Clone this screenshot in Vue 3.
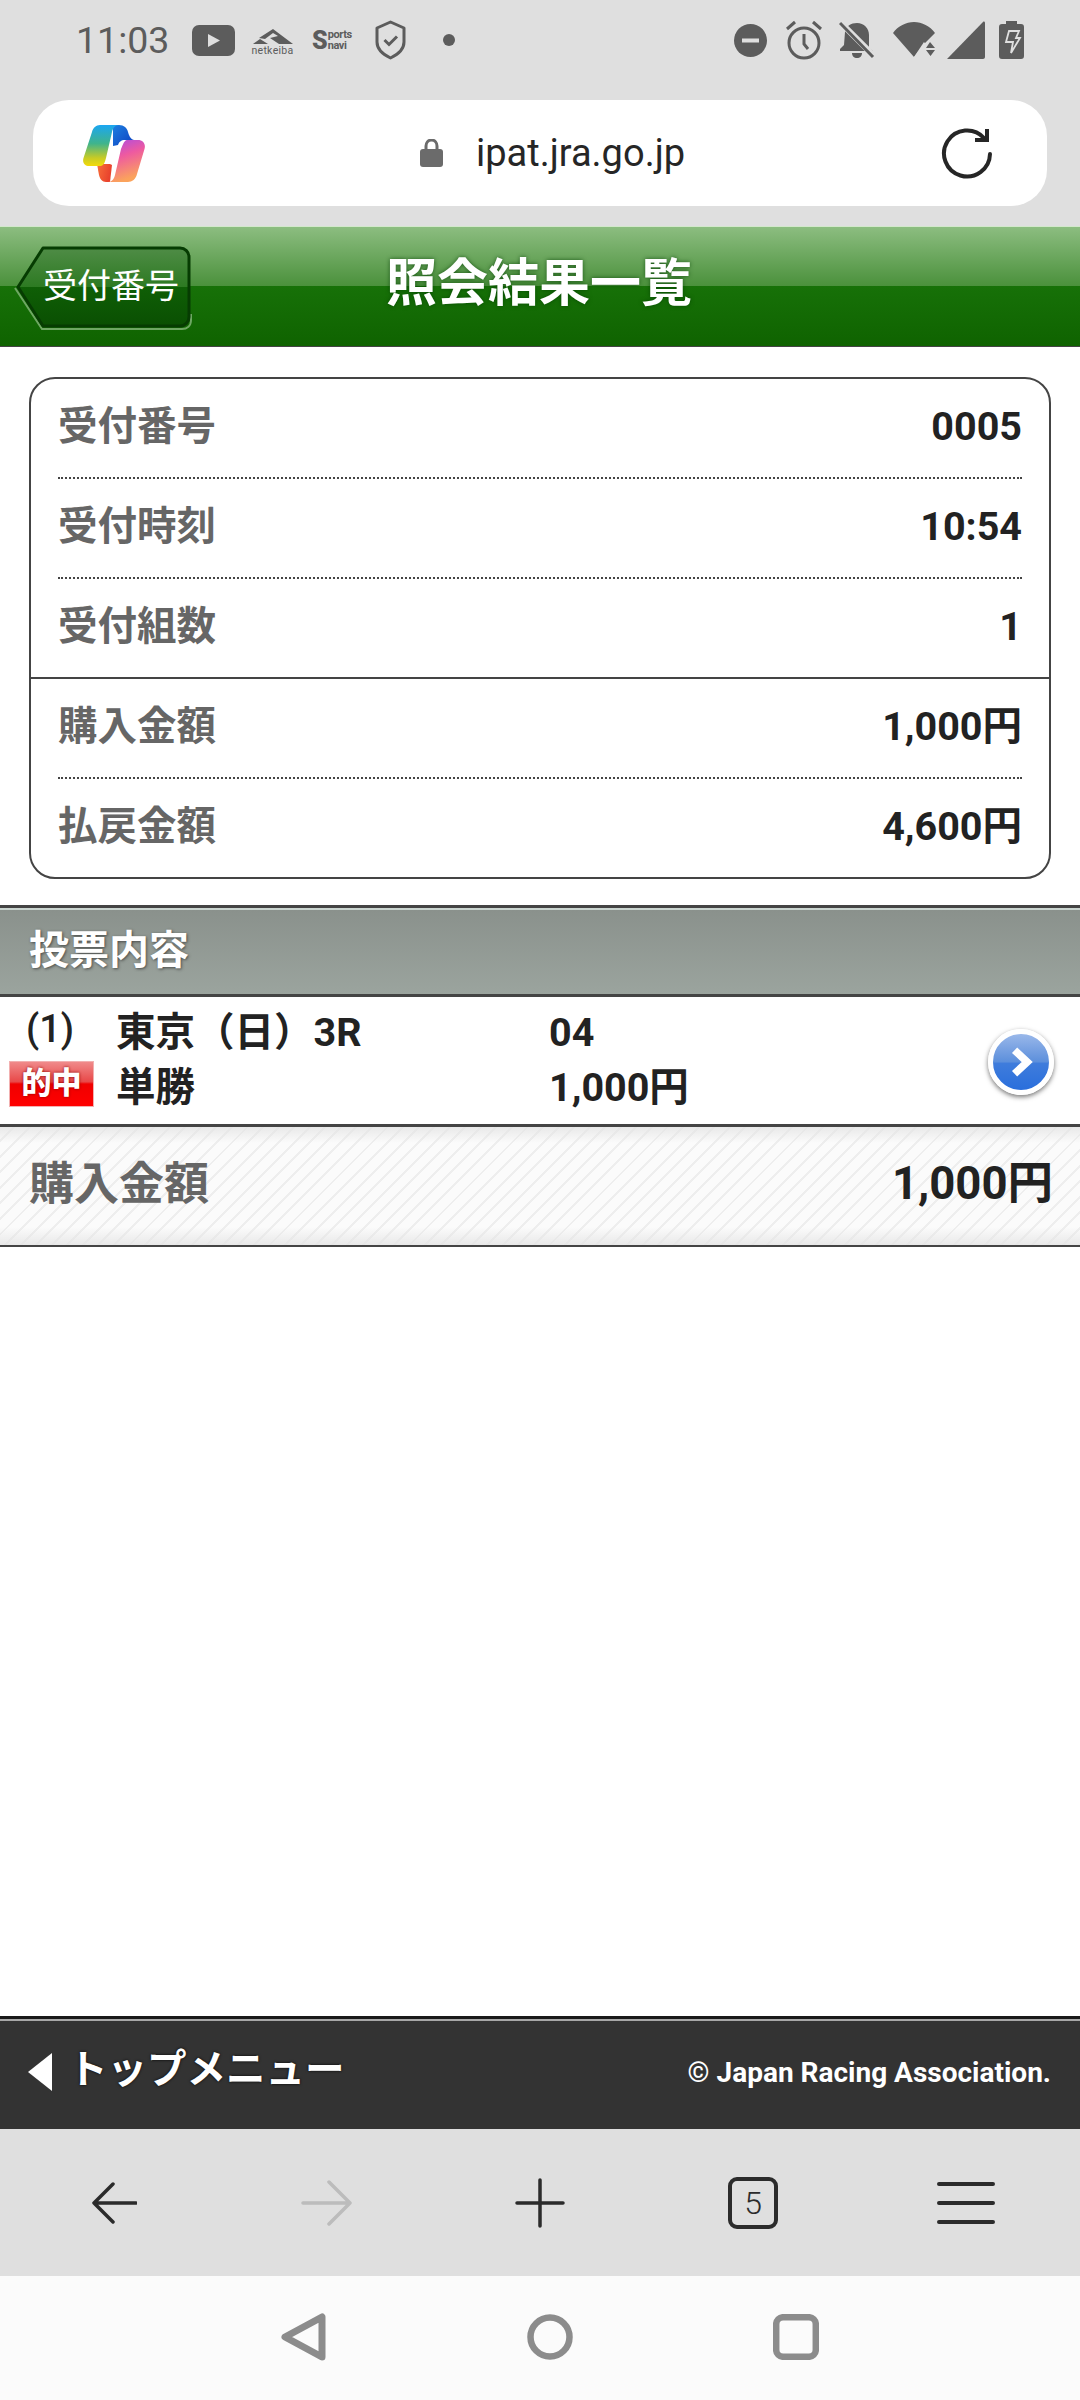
<script setup>
const groups = [
  [
    { label: "受付番号", value: "0005" },
    { label: "受付時刻", value: "10:54" },
    { label: "受付組数", value: "1" },
  ],
  [
    { label: "購入金額", value: "1,000円" },
    { label: "払戻金額", value: "4,600円" },
  ],
];
</script>

<template>
  <div class="page">
    <div class="chrome">
      <div class="status">
        <span class="time">11:03</span>
        <svg class="ic-yt" viewBox="0 0 43 31"><rect width="43" height="31" rx="7" fill="#5c5c5c" /><path d="M16 9l12 6.500L16 22z" fill="#dfdfdf" /></svg>
        <div class="netkeiba">
          <svg viewBox="0 0 41 17" width="41" height="17"><path d="M21 0l20 15H27l-9-6 8-2-5-3-8 6-6-1zM1 15l7-5 8 5z" fill="#5c5c5c" /></svg>
          <span>netkeiba</span>
        </div>
        <div class="navi">
          <b>S</b>
          <span class="navi-words"><i>ports</i><i>navi</i></span>
        </div>
        <svg class="ic-shield" viewBox="0 0 31 40"><path d="M15.500 2L29 8v14c0 7-5 12-13.500 16C7 34 2 29 2 22V8z" fill="none" stroke="#5c5c5c" stroke-width="3" stroke-linejoin="round" /><path d="M9.500 20l4.500 4.500 8-8" fill="none" stroke="#5c5c5c" stroke-width="3" /></svg>
        <span class="dot"></span>

        <div class="status-right">
          <svg width="33" height="33" viewBox="0 0 33 33"><circle cx="16.500" cy="16.500" r="16.500" fill="#5c5c5c" /><rect x="8" y="14.500" width="17" height="4" fill="#dfdfdf" /></svg>
          <svg class="gap-alarm" width="36" height="40" viewBox="0 0 36 40"><circle cx="18" cy="23" r="15" fill="none" stroke="#5c5c5c" stroke-width="3" /><path d="M18 14v10l4 5M1 9l8-7M35 9l-8-7" fill="none" stroke="#5c5c5c" stroke-width="3" /></svg>
          <svg class="gap-bell" width="36" height="38" viewBox="0 0 36 38"><path d="M6 11C7 5 12 2 18 2c7 0 12 5 12 12v13l4 3H1v-2l4-4z" fill="#5c5c5c" /><path d="M13 32h10c0 3-2 5-5 5s-5-2-5-5z" fill="#5c5c5c" /><path d="M0 0l36 36" stroke="#dfdfdf" stroke-width="6" /><path d="M1 2l33 34" stroke="#5c5c5c" stroke-width="3" /></svg>
          <svg class="gap-wifi" width="42" height="36" viewBox="0 0 42 36"><path d="M0 11C5 4 13 0 21 0s16 4 21 11L31 22v0l-10 13z" fill="#5c5c5c" /><path d="M31 20l-10 15h21z" fill="#dfdfdf" /><path d="M37 20l5 6h-9zM33 28h9l-4.500 6z" fill="#5c5c5c" /></svg>
          <svg class="gap-signal" width="38" height="38" viewBox="0 0 38 38"><path d="M0 38L36 1c1-1 2 0 2 1v34c0 1-1 2-2 2z" fill="#5c5c5c" /></svg>
          <svg class="gap-battery" width="25" height="38" viewBox="0 0 25 38"><path d="M7 0h11v3h4c2 0 3 1 3 3v29c0 2-1 3-3 3H3c-2 0-3-1-3-3V6c0-2 1-3 3-3h4z" fill="#5c5c5c" /><path d="M10 10h10l-3 7h4l-9 15 2-11H7z" fill="none" stroke="#dfdfdf" stroke-width="1.800" /></svg>
        </div>
      </div>

      <div class="urlbar">
        <svg class="copilot" viewBox="0 0 62 57">
          <defs>
            <linearGradient id="cpLeft" x1="0" y1="0" x2="0" y2="1">
              <stop offset="0" stop-color="#1ba6f2" />
              <stop offset="0.45" stop-color="#3fb48c" />
              <stop offset="0.8" stop-color="#c6cb26" />
              <stop offset="1" stop-color="#f4da0a" />
            </linearGradient>
            <linearGradient id="cpRight" x1="0" y1="0" x2="0.300" y2="1">
              <stop offset="0" stop-color="#a94be6" />
              <stop offset="0.45" stop-color="#ee5aa0" />
              <stop offset="1" stop-color="#fba35c" />
            </linearGradient>
            <linearGradient id="cpBlue" x1="0" y1="0" x2="1" y2="1">
              <stop offset="0" stop-color="#1d7fe0" />
              <stop offset="1" stop-color="#0f3fc0" />
            </linearGradient>
            <linearGradient id="cpRed" x1="0" y1="0" x2="1" y2="0.300">
              <stop offset="0" stop-color="#f8703a" />
              <stop offset="1" stop-color="#e8402c" />
            </linearGradient>
          </defs>
          <path d="M30 0h6c5 0 8 3 9 7 1 3 2 7 6 8H42c-4 0-6 2-7 5l-5 1z" fill="url(#cpBlue)" />
          <path d="M14 39h13l2 1-2 17h-4c-4 0-6-3-7-7z" fill="url(#cpRed)" />
          <path d="M17 0h19c-4 0-6 3-7 7L23 33c-1 4-2 7-5 8H6c-4 0-7-3-5.500-8L9 7c1-4 4-7 8-7z" fill="url(#cpLeft)" />
          <path d="M44 15h11c5 0 8 4 6.500 9L54 49c-1 5-5 8-9 8H25c4 0 6-3 7-7l6-26c1-2 3-9 6-9z" fill="url(#cpRight)" />
        </svg>
        <svg class="lock" viewBox="0 0 23 28"><path d="M6 11V7c0-3 2-6 5.500-6S17 4 17 7v4" fill="none" stroke="#6b6b6b" stroke-width="3" /><rect y="10" width="23" height="18" rx="3" fill="#6b6b6b" /></svg>
        <span class="url">ipat.jra.go.jp</span>
        <svg class="reload" viewBox="0 0 52 52"><path d="M43 11A23 23 0 1 0 49 27" fill="none" stroke="#262626" stroke-width="4" stroke-linecap="round" /><path d="M46 2v11H34" fill="none" stroke="#262626" stroke-width="4" /></svg>
      </div>
    </div>

    <header class="head">
      <div class="back">
        <svg class="back-shape" viewBox="0 0 178 84" preserveAspectRatio="none">
          <defs>
            <linearGradient id="backFill" x1="0" y1="0" x2="0" y2="1">
              <stop offset="0" stop-color="#4f8c46" />
              <stop offset="0.5" stop-color="#2d7a22" />
              <stop offset="0.5" stop-color="#0f5f06" />
              <stop offset="1" stop-color="#0a4f02" />
            </linearGradient>
          </defs>
          <path d="M1 42L28 83H168c5 0 9-3 9-9v-6" fill="none" stroke="#6ea763" stroke-width="2" />
          <path d="M29 2H166c5 0 9 4 9 9v60c0 5-4 9-9 9H29L4 41z" fill="url(#backFill)" stroke="#063c02" stroke-width="3" stroke-linejoin="round" />
        </svg>
        <span class="back-text">受付番号</span>
      </div>
      <h1 class="title">照会結果一覧</h1>
      <div></div>
    </header>

    <main class="main">
      <section class="card">
        <div v-for="(group, g) in groups" :key="g" class="group">
          <div v-for="row in group" :key="row.label" class="row">
            <span class="row-label">{{ row.label }}</span>
            <span class="row-value">{{ row.value }}</span>
          </div>
        </div>
      </section>

      <div class="section">
        <h2 class="section-title">投票内容</h2>
      </div>

      <div class="bet">
        <span class="bet-no">(1)</span>
        <span class="bet-text">東京（日）3R</span>
        <span class="bet-text">04</span>
        <span class="bet-go">
          <svg width="30" height="38" viewBox="0 0 30 38"><path d="M5 5l15 14L5 33" fill="none" stroke="#fff" stroke-width="9" /></svg>
        </span>
        <span class="badge">的中</span>
        <span class="bet-text">単勝</span>
        <span class="bet-text">1,000円</span>
      </div>

      <div class="total">
        <span class="total-label">購入金額</span>
        <span class="total-value">1,000円</span>
      </div>
    </main>

    <footer class="foot">
      <div class="foot-menu">
        <span class="foot-arrow"></span>
        <span class="foot-text">トップメニュー</span>
      </div>
      <span class="copy">© Japan Racing Association.</span>
    </footer>

    <nav class="toolbar">
      <div class="tool">
        <svg width="46" height="42" viewBox="0 0 46 42"><path d="M45 21H3M22 2L3 21l19 19" fill="none" stroke="#2b2b2b" stroke-width="3.500" stroke-linecap="round" stroke-linejoin="round" /></svg>
      </div>
      <div class="tool">
        <svg width="52" height="46" viewBox="0 0 52 46"><path d="M2 23h47M28 2l21 21-21 21" fill="none" stroke="#bcbcbc" stroke-width="3.500" stroke-linecap="round" stroke-linejoin="round" /></svg>
      </div>
      <div class="tool">
        <svg width="50" height="50" viewBox="0 0 50 50"><path d="M2 25h46M25 2v46" fill="none" stroke="#2b2b2b" stroke-width="3.500" stroke-linecap="round" /></svg>
      </div>
      <div class="tool">
        <span class="tabs">5</span>
      </div>
      <div class="tool">
        <svg width="58" height="44" viewBox="0 0 58 44"><path d="M2 3h54M2 22h54M2 41h54" fill="none" stroke="#2b2b2b" stroke-width="4" stroke-linecap="round" /></svg>
      </div>
    </nav>

    <div class="sysnav">
      <svg width="46" height="48" viewBox="0 0 46 48"><path d="M41 4v40L4 24z" fill="none" stroke="#8c8c8c" stroke-width="7" stroke-linejoin="round" /></svg>
      <svg width="46" height="46" viewBox="0 0 46 46"><circle cx="23" cy="23" r="19.500" fill="none" stroke="#8c8c8c" stroke-width="6.500" /></svg>
      <svg width="46" height="46" viewBox="0 0 46 46"><rect x="3.200" y="3.200" width="39.600" height="39.600" rx="7" fill="none" stroke="#8c8c8c" stroke-width="6.500" /></svg>
    </div>
  </div>
</template>

<style scoped>
.page {
  display: flex;
  flex-direction: column;
  width: 1080px;
  height: 2400px;
  overflow: hidden;
  background: #fff;
  font-family: Roboto, "Noto Sans CJK JP", sans-serif;
  color: #222;
}

.chrome {
  height: 226px;
  background: #dfdfdf;
}

.status {
  display: flex;
  align-items: center;
  height: 80px;
  padding: 0 56px 0 76px;
  box-sizing: border-box;
  margin-bottom: 20px;
}

.time {
  width: 116px;
  font-size: 37.500px;
  color: #5c5c5c;
}

.ic-yt {
  width: 43px;
  height: 31px;
}

.netkeiba {
  display: flex;
  flex-direction: column;
  align-items: center;
  width: 41px;
  margin-left: 17px;
  margin-top: 4px;
}

.netkeiba span {
  font-size: 10.500px;
  line-height: 10px;
  letter-spacing: 0.3px;
  color: #5c5c5c;
}

.navi {
  display: flex;
  align-items: center;
  width: 40px;
  margin-left: 19px;
  color: #5c5c5c;
  font-weight: 700;
}

.navi b {
  font-size: 25px;
  line-height: 25px;
}

.navi-words {
  display: flex;
  flex-direction: column;
  font-size: 11px;
  line-height: 11px;
  letter-spacing: -0.4px;
}

.navi-words i {
  font-style: normal;
}

.ic-shield {
  width: 31px;
  height: 40px;
  margin-left: 23px;
}

.dot {
  width: 12px;
  height: 12px;
  margin-left: 37px;
  border-radius: 50%;
  background: #5c5c5c;
}

.status-right {
  display: flex;
  align-items: center;
  margin-left: auto;
}

.gap-alarm {
  margin-left: 19px;
}

.gap-bell {
  margin-left: 17px;
}

.gap-wifi {
  margin-left: 18px;
}

.gap-signal {
  margin-left: 12px;
}

.gap-battery {
  margin-left: 14px;
}

.urlbar {
  display: flex;
  align-items: center;
  height: 106px;
  margin: 0 33px;
  padding: 0 54px 0 50px;
  border-radius: 36px;
  background: #fff;
}

.copilot {
  width: 62px;
  height: 57px;
}

.lock {
  width: 23px;
  height: 28px;
  margin-left: 275px;
}

.url {
  margin-left: 33px;
  font-size: 38px;
  color: #262626;
}

.reload {
  width: 52px;
  height: 52px;
  margin-left: auto;
}

.head {
  display: grid;
  grid-template-columns: 1fr auto 1fr;
  align-items: center;
  height: 121px;
  padding: 0 16px 0 14px;
  border-top: 1px solid #d3e8cc;
  border-bottom: 1px solid #444;
  box-sizing: border-box;
  background: linear-gradient(#8cbd80 0, #4b913c 49.500%, #177108 49.500%, #0f6300 100%);
}

.back {
  position: relative;
  display: flex;
  align-items: center;
  width: 178px;
  height: 84px;
  margin-top: 2px;
}

.back-shape {
  position: absolute;
  inset: 0;
  width: 178px;
  height: 84px;
}

.back-text {
  position: relative;
  margin-left: 29px;
  margin-top: -3px;
  font-size: 34px;
  line-height: 1;
  color: #fff;
}

.title {
  margin: -6px 0 0;
  font-size: 51px;
  line-height: 1;
  font-weight: 700;
  color: #fff;
  text-shadow: 0 0 4px rgba(0, 60, 0, 0.7);
}

.main {
  flex: 1;
}

.card {
  height: 502px;
  margin: 30px 29px 26px;
  border: 2px solid #444;
  border-radius: 26px;
  box-sizing: border-box;
}

.group:first-child {
  border-bottom: 2px solid #444;
}

.row {
  display: flex;
  align-items: center;
  justify-content: space-between;
  height: 100px;
  margin: 0 27px;
  padding-bottom: 3px;
  box-sizing: border-box;
  border-bottom: 2px dotted #444;
  font-weight: 700;
}

.group:first-child .row:last-child {
  height: 98px;
}

.group .row:last-child {
  border-bottom: none;
}

.group:last-child .row:last-child {
  height: 98px;
}

.row-label {
  font-size: 39.500px;
  line-height: 1;
  color: #666;
}

.row-value {
  font-size: 39.500px;
  line-height: 1;
  color: #222;
}

.section {
  height: 92px;
  border-top: 3px solid #444;
  border-bottom: 3px solid #444;
  box-sizing: border-box;
  padding-top: 2px;
  background: linear-gradient(#c9d4cf 0, #c9d4cf 2px, #8a918c 2px, #9ba49e 100%);
  background-clip: padding-box;
}

.section-title {
  margin: 0;
  padding-left: 29px;
  font-size: 40px;
  line-height: 82px;
  font-weight: 700;
  color: #fff;
  text-shadow: 1px 1px 3px rgba(40, 40, 40, 0.7);
}

.bet {
  display: grid;
  grid-template-columns: 116px 433px 1fr 92px;
  grid-template-rows: 55px 55px;
  align-items: center;
  height: 127px;
  padding-top: 8px;
  box-sizing: border-box;
}

.bet-no {
  padding-left: 26px;
  margin-top: -7px;
  font-size: 38px;
  line-height: 1;
  font-weight: 500;
}

.bet-text {
  font-size: 39.500px;
  line-height: 1;
  font-weight: 700;
  color: #222;
}

.bet-go {
  grid-column: 4;
  grid-row: 1 / span 2;
  display: flex;
  align-items: center;
  justify-content: center;
  width: 66px;
  height: 66px;
  margin-top: 4px;
  padding-left: 3px;
  box-sizing: border-box;
  border: 5px solid #fff;
  border-radius: 50%;
  background: linear-gradient(#9ab8ea 0, #5c8fdc 50%, #3f7cdc 52%, #2a6fdc 100%);
  box-shadow: 0 2px 5px rgba(0, 0, 0, 0.55);
}

.bet-go svg {
  width: 26px;
  height: 32px;
}

.badge {
  display: block;
  width: 85px;
  height: 46px;
  margin-left: 9px;
  margin-top: -8px;
  box-sizing: border-box;
  border: 1px solid #f2b0b0;
  background: linear-gradient(#f08a8a 0, #e84848 45%, #f00000 50%, #ff0000 100%);
  font-size: 30px;
  line-height: 42px;
  font-weight: 900;
  text-align: center;
  color: #fff;
  text-shadow: 0 0 3px #800;
}

.total {
  display: flex;
  align-items: center;
  justify-content: space-between;
  height: 123px;
  padding: 0 27px 4px 29px;
  box-sizing: border-box;
  border-top: 3px solid #444;
  border-bottom: 2px solid #444;
  background:
    linear-gradient(rgba(228, 228, 228, 0.8) 0, rgba(255, 255, 255, 0) 16px, rgba(255, 255, 255, 0) 100px, rgba(228, 228, 228, 0.8) 100%),
    repeating-linear-gradient(135deg, #fbfbfb 0, #fbfbfb 9px, #eeeeee 9px, #eeeeee 11px);
  font-weight: 700;
}

.total-label {
  font-size: 45px;
  line-height: 1;
  color: #666;
}

.total-value {
  font-size: 45.500px;
  line-height: 1;
  color: #222;
}

.foot {
  display: flex;
  align-items: center;
  justify-content: space-between;
  height: 113px;
  padding: 0 29px 5px 28px;
  box-sizing: border-box;
  border-top: 3px solid #1a1a1a;
  background: linear-gradient(#a8a8a8 0, #a8a8a8 2px, #333 2px, #333 100%);
  color: #fff;
  font-weight: 700;
}

.foot-menu {
  display: flex;
  align-items: center;
  gap: 16px;
}

.foot-text {
  margin-top: -3px;
  font-size: 39.500px;
  line-height: 1;
  text-shadow: 0 0 3px #000;
}

.foot-arrow {
  width: 0;
  height: 0;
  border-top: 19px solid transparent;
  border-bottom: 19px solid transparent;
  border-right: 24px solid #fff;
}

.copy {
  margin-top: 2px;
  font-size: 28px;
}

.toolbar {
  display: flex;
  align-items: center;
  height: 147px;
  padding: 0 7px;
  background: #dfdfdf;
}

.tool {
  flex: 1;
  display: flex;
  align-items: center;
  justify-content: center;
}

.tabs {
  width: 50px;
  height: 52px;
  box-sizing: border-box;
  border: 4px solid #2b2b2b;
  border-radius: 9px;
  font-size: 32px;
  font-weight: 300;
  line-height: 44px;
  text-align: center;
  color: #2b2b2b;
}

.sysnav {
  display: flex;
  align-items: center;
  gap: 200px;
  height: 124px;
  padding-left: 281px;
  padding-bottom: 2px;
  box-sizing: border-box;
  background: #fbfbfb;
}
</style>
